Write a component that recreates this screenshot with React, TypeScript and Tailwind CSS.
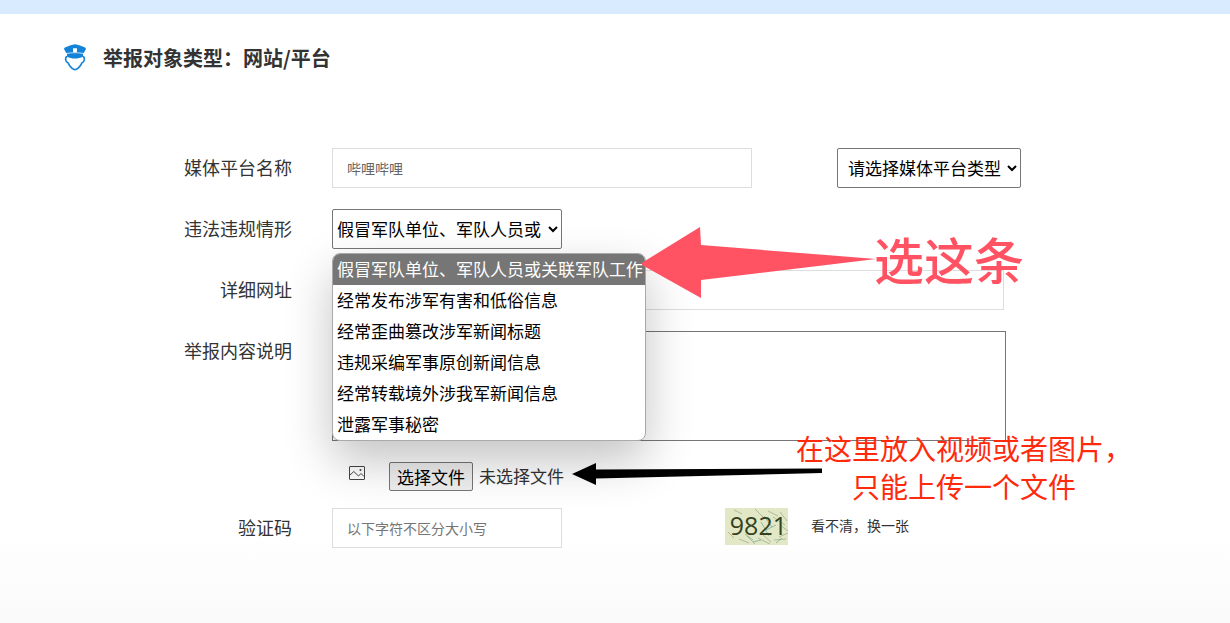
import { useRef, useState } from "react";
import type { ReactNode } from "react";

const violations = [
  "假冒军队单位、军队人员或关联军队工作",
  "经常发布涉军有害和低俗信息",
  "经常歪曲篡改涉军新闻标题",
  "违规采编军事原创新闻信息",
  "经常转载境外涉我军新闻信息",
  "泄露军事秘密",
];

function OfficerIcon() {
  return (
    <svg width="22" height="28" viewBox="0 0 22 28" aria-hidden="true">
      <path
        d="M11 .3C14 .8 18 2.300 21 3.600c.9.4 1.100 1 .7 1.800L19.800 9H2.200L.3 5.400C-.1 4.600.1 4 1 3.600 4 2.300 8 .8 11 .3Z"
        fill="#1283d8"
      />
      <path d="M9 4.200h4v3c0 .9-1 1.300-2 1.600-1-.3-2-.7-2-1.600Z" fill="#fff" />
      <path d="M3 9.300c5-.8 11-.8 16 0v3.500c-4.800 2.400-11.200 2.400-16 0Z" fill="#1283d8" />
      <path d="M2.500 9.400c5.500-.9 11.500-.9 17 0" fill="none" stroke="#fff" strokeWidth="0.700" />
      <path
        d="M3.200 12.600C1.600 12.800 1.300 14.500 1.900 16.500c.5 1.400 1.200 2 2.100 2.300.8 2 2 3.700 3.800 5.300C9 25.200 10 25.700 11 25.700s2-.5 3.200-1.600c1.800-1.600 3-3.300 3.800-5.300.9-.3 1.600-.9 2.100-2.300.6-2 .3-3.700-1.300-3.900"
        fill="none"
        stroke="#1283d8"
        strokeWidth="1.700"
        strokeLinejoin="round"
      />
    </svg>
  );
}

function PictureIcon() {
  return (
    <svg className="mt-1" width="16" height="14" viewBox="0 0 16 14" fill="none" stroke="#444" aria-hidden="true">
      <rect x="0.500" y="0.500" width="15" height="13" rx="0.500" />
      <path d="M1 9 4.800 5.500 9.500 10l2.500-2.500L15 10.500" />
      <circle cx="11.500" cy="4" r="1" fill="#444" stroke="none" />
    </svg>
  );
}

function Captcha() {
  return (
    <div className="relative h-[37px] w-[63px] overflow-hidden bg-[#e2e8c6]">
      <svg className="absolute inset-0" width="63" height="37" viewBox="0 0 63 37" fill="none" strokeWidth="0.600" aria-hidden="true">
        <path d="M9 2l8 4M30 1l9 9M43 3l10 5M48 9l12 8M3 24l6 6M14 31l10 4M22 28l8 8M33 30l12 6M38 27l8 7M55 17l8 6M54 29l9-4M49 32l12-1M55 4l7 9" stroke="#8b9a82" />
        <path d="M36 14l8 14M39 8l8 11M41 22l10-5M28 34l8-2M51 35l6-5M20 26l8 6" stroke="#5d9a8c" />
      </svg>
      <span className="absolute inset-0 pr-px text-right font-['Open_Sans',sans-serif] text-[25px] leading-[35px] text-[#35401f]">
        9821
      </span>
    </div>
  );
}

function Row({ label, htmlFor, children }: { label: string; htmlFor: string; children: ReactNode }) {
  return (
    <div className="flex items-start">
      <label htmlFor={htmlFor} className="mr-10 w-[292px] shrink-0 text-right text-lg leading-[38px] text-[#333]">
        {label}
      </label>
      {children}
    </div>
  );
}

export default function App() {
  const [violation, setViolation] = useState(violations[0]);
  const fileRef = useRef<HTMLInputElement>(null);
  return (
    <div className="min-h-screen bg-linear-to-b from-white from-85% to-[#fafafa] font-['Noto_Sans_CJK_SC',sans-serif] text-[#333]">
      <div className="h-3.5 bg-[#d9ebff]" />
      <header className="flex items-center gap-[17px] px-16 pt-7">
        <OfficerIcon />
        <h1 className="text-xl leading-8 font-bold">举报对象类型：网站/平台</h1>
      </header>

      <form className="mt-[74px] flex flex-col gap-[21px] pb-10" onSubmit={(e) => e.preventDefault()}>
        <Row label="媒体平台名称" htmlFor="platform">
          <input
            id="platform"
            type="text"
            defaultValue="哔哩哔哩"
            className="h-10 w-[420px] border border-[#ddd] bg-white px-3.5 text-sm text-[#666] outline-none"
          />
          <select
            aria-label="媒体平台类型"
            className="ml-[85px] h-10 w-[184px] rounded-xs border border-[#767676] bg-white pb-0.5 pl-1.5 text-[17px] text-black"
          >
            <option>请选择媒体平台类型</option>
          </select>
        </Row>

        <Row label="违法违规情形" htmlFor="violation">
          <div className="relative">
            <select
              id="violation"
              value={violation}
              onChange={(e) => setViolation(e.target.value)}
              className="block h-10 w-[230px] rounded-xs border border-[#767676] bg-white pr-1 pb-0.5 text-[17px] text-black"
            >
              {violations.map((v) => (
                <option key={v}>{v}</option>
              ))}
            </select>
            <ul
              role="listbox"
              aria-label="违法违规情形"
              className="absolute top-full left-0 z-10 mt-1 overflow-hidden rounded-lg border border-[#aaa] bg-white shadow-[0_20px_48px_rgba(0,0,0,0.24)]"
            >
              {violations.map((v) => (
                <li
                  key={v}
                  role="option"
                  aria-selected={v === violation}
                  onClick={() => setViolation(v)}
                  className="px-1 pb-0.5 text-[17px] leading-[29px] whitespace-nowrap text-black aria-selected:bg-[#767676] aria-selected:pr-0.5 aria-selected:text-white"
                >
                  {v}
                </li>
              ))}
            </ul>
            <div className="absolute top-4 left-[310px] z-20 flex items-start text-[#ff5364]">
              <svg width="234" height="74" viewBox="0 0 234 74" fill="currentColor" aria-hidden="true">
                <path d="M-2 39 58 2 59 20 234 34 59 55 59 73Z" />
              </svg>
              <span className="-ml-0.5 text-[50px] leading-[66px] font-medium whitespace-nowrap">选这条</span>
            </div>
          </div>
        </Row>

        <Row label="详细网址" htmlFor="url">
          <input id="url" type="url" className="h-10 w-[672px] border border-[#ddd] bg-white px-3.5 text-sm outline-none" />
        </Row>

        <Row label="举报内容说明" htmlFor="details">
          <textarea
            id="details"
            className="block h-[110px] w-[674px] resize-none border border-[#767676] bg-white p-2 text-base outline-none"
          />
        </Row>

        <div className="relative ml-[349px] flex h-[29px] items-start">
          <PictureIcon />
          <input ref={fileRef} type="file" aria-label="选择文件" className="hidden" />
          <button
            type="button"
            onClick={() => fileRef.current?.click()}
            className="ml-6 h-[29px] rounded-xs border border-[#767676] bg-[#efefef] px-[7px] text-[17px] leading-[25px] text-black"
          >
            选择文件
          </button>
          <span className="ml-1.5 text-[17px] leading-[27px]">未选择文件</span>
          <div className="absolute -top-[33px] left-[223px] z-20 flex items-start">
            <svg width="252" height="56" viewBox="0 0 252 56" aria-hidden="true">
              <path d="M0 45 24 34V40.500L250 39.500V44L24 49.500V56Z" fill="#000" />
            </svg>
            <p className="-ml-7 text-center text-[28px] leading-[38px] whitespace-nowrap text-[#ff2a0c]">
              在这里放入视频或者图片，
              <br />
              只能上传一个文件
            </p>
          </div>
        </div>

        <div className="-mt-1">
          <Row label="验证码" htmlFor="captcha">
            <input
              id="captcha"
              type="text"
              placeholder="以下字符不区分大小写"
              className="h-10 w-[230px] border border-[#ddd] bg-white px-3.5 text-sm outline-none placeholder:text-[#757575]"
            />
            <div className="ml-[163px] flex items-start gap-[23px]">
              <Captcha />
              <button type="button" className="text-sm leading-[34px] text-[#333]">
                看不清，换一张
              </button>
            </div>
          </Row>
        </div>
      </form>
    </div>
  );
}
